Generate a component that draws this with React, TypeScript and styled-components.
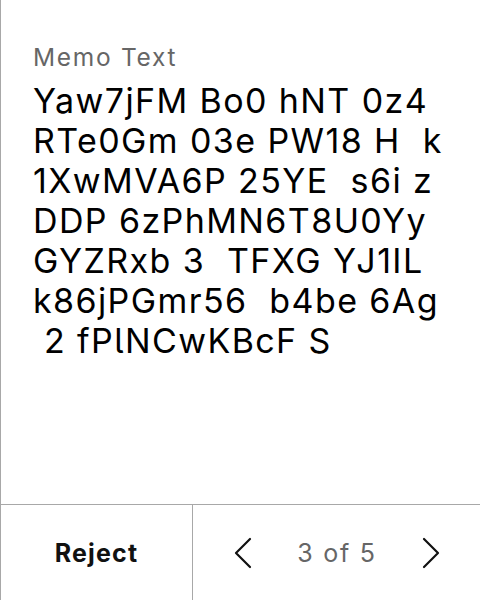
import React from "react";
import styled, { createGlobalStyle } from "styled-components";

const Global = createGlobalStyle`
  html, body { margin: 0; padding: 0; background: #fff; }
  body { font-family: Inter, "Noto Sans", sans-serif; }
`;

const Screen = styled.div`
  width: 480px;
  height: 600px;
  box-sizing: border-box;
  border-left: 1px solid #a8a8a8;
  display: flex;
  flex-direction: column;
`;

const Content = styled.div`
  flex: 1;
  padding: 41px 20px 0 32px;
`;

const Label = styled.div`
  font-size: 24.5px;
  line-height: 32px;
  letter-spacing: 1.7px;
  color: #666;
`;

const Memo = styled.div`
  margin-top: 8px;
  font-size: 34px;
  line-height: 40px;
  letter-spacing: 1.4px;
  color: #000;
  white-space: break-spaces;
  font-feature-settings: "cv05" 1;
`;

const Footer = styled.div`
  box-sizing: border-box;
  height: 96px;
  border-top: 1px solid #a8a8a8;
  display: flex;
`;

const RejectButton = styled.button`
  width: 192px;
  border: none;
  border-right: 1px solid #a8a8a8;
  background: none;
  font-family: inherit;
  font-size: 25px;
  letter-spacing: 1.2px;
  font-weight: 700;
  color: #111;
  padding: 0;
`;

const Pager = styled.div`
  flex: 1;
  display: flex;
  align-items: center;
  justify-content: space-between;
  padding: 0 40px 0 41px;
`;

const Arrow = styled.button`
  border: none;
  background: none;
  padding: 0;
  display: flex;
  width: 18px;
  height: 40px;
  align-items: center;
  justify-content: center;
`;

const Count = styled.span`
  font-size: 25px;
  letter-spacing: 1.8px;
  color: #666;
`;

const Chevron = ({ dir }: { dir: "left" | "right" }) => (
  <svg width="18" height="32" viewBox="0 0 18 32" fill="none">
    <path
      d={dir === "left" ? "M16 2 L2 16 L16 30" : "M2 2 L16 16 L2 30"}
      stroke="#111"
      strokeWidth="2.2"
      strokeLinecap="round"
      strokeLinejoin="round"
    />
  </svg>
);

const text =
  "Yaw7jFM Bo0 hNT 0z4 RTe0Gm 03e PW18 H  k 1XwMVA6P 25YE  s6i z DDP 6zPhMN6T8U0Yy GYZRxb 3  TFXG YJ1IL k86jPGmr56  b4be 6Ag  2 fPlNCwKBcF S";

export default function App() {
  return (
    <>
      <Global />
      <Screen>
        <Content>
          <Label>Memo Text</Label>
          <Memo>{text}</Memo>
        </Content>
        <Footer>
          <RejectButton>Reject</RejectButton>
          <Pager>
            <Arrow aria-label="Previous">
              <Chevron dir="left" />
            </Arrow>
            <Count>3 of 5</Count>
            <Arrow aria-label="Next">
              <Chevron dir="right" />
            </Arrow>
          </Pager>
        </Footer>
      </Screen>
    </>
  );
}
